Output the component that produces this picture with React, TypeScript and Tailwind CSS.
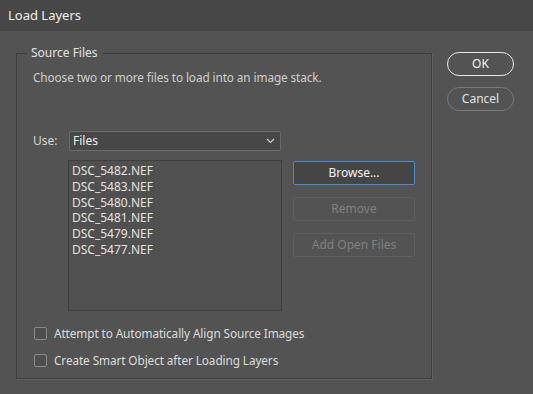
const files = ["DSC_5482.NEF", "DSC_5483.NEF", "DSC_5480.NEF", "DSC_5481.NEF", "DSC_5479.NEF", "DSC_5477.NEF"];

const Check = ({ label }: { label: string }) => (
  <label className="flex items-center gap-[7px] h-[13px]">
    <span className="w-[13px] h-[13px] rounded-[2px] border border-[#8a8a8a] bg-[#4e4e4e]" />
    <span className="text-[11.8px] tracking-[-0.1px] text-[#dcdcdc]">{label}</span>
  </label>
);

export default function App() {
  return (
    <div className="w-[533px] h-[394px] bg-[#535353] flex flex-col text-[#dcdcdc]" style={{ fontFamily: '"Noto Sans", sans-serif' }}>
      <div className="h-[31px] bg-[#474747] flex items-center pl-[8px] text-[13px] text-[#f0f0f0]">Load Layers</div>
      <div className="flex pl-[16px] pt-[22px]">
        <div className="relative w-[416px] h-[326px] border border-[#3c3c3c] shadow-[1px_1px_0_#626262]">
          <span className="absolute -top-[9px] left-[10px] px-[4px] bg-[#535353] text-[12px] leading-[16px] text-[#e4e4e4]">Source Files</span>
          <div className="pl-[16px] pt-[15px] text-[11.8px] tracking-[-0.1px] leading-[16px] text-[#cfcfcf]">Choose two or more files to load into an image stack.</div>
          <div className="flex items-center pl-[16px] mt-[46px]">
            <span className="w-[36px] text-[12px] text-[#d6d6d6]">Use:</span>
            <div className="w-[212px] h-[20px] border border-[#6a6a6a] bg-[#474747] rounded-[2px] flex items-center justify-between pl-[3px] pr-[5px] text-[12px] text-[#f0f0f0]">
              <span>Files</span>
              <svg width="9" height="6" viewBox="0 0 9 6"><path d="M1 1l3.5 3.5L8 1" stroke="#cfcfcf" strokeWidth="1.2" fill="none" /></svg>
            </div>
          </div>
          <div className="flex pl-[51px] mt-[9px] gap-[11px]">
            <div className="w-[214px] h-[151px] border border-[#3e3e3e] bg-[#505050] pl-[3px] pt-[2px]">
              {files.map((f) => (
                <div key={f} className="text-[12px] leading-[15.8px] h-[15.8px] text-[#e2e2e2]">{f}</div>
              ))}
            </div>
            <div className="flex flex-col gap-[12px] pt-[1px]">
              <div className="w-[122px] h-[24px] rounded-[2px] border border-[#4a8ad8] bg-[#454545] flex items-center justify-center text-[12px] text-[#f2f2f2]">Browse...</div>
              <div className="w-[122px] h-[24px] rounded-[2px] border border-[#5e5e5e] flex items-center justify-center text-[12px] text-[#808080]">Remove</div>
              <div className="w-[122px] h-[24px] rounded-[2px] border border-[#5e5e5e] flex items-center justify-center text-[12px] text-[#808080]">Add Open Files</div>
            </div>
          </div>
          <div className="flex flex-col gap-[14px] pl-[17px] mt-[16px]">
            <Check label="Attempt to Automatically Align Source Images" />
            <Check label="Create Smart Object after Loading Layers" />
          </div>
        </div>
        <div className="flex flex-col gap-[11px] pl-[15px] -mt-[1px]">
          <div className="w-[67px] h-[24px] rounded-full border-[1.5px] border-[#e8e8e8] flex items-center justify-center text-[12px] text-[#f4f4f4]">OK</div>
          <div className="w-[67px] h-[24px] rounded-full border border-[#7a7a7a] flex items-center justify-center text-[12px] text-[#e0e0e0]">Cancel</div>
        </div>
      </div>
    </div>
  );
}
